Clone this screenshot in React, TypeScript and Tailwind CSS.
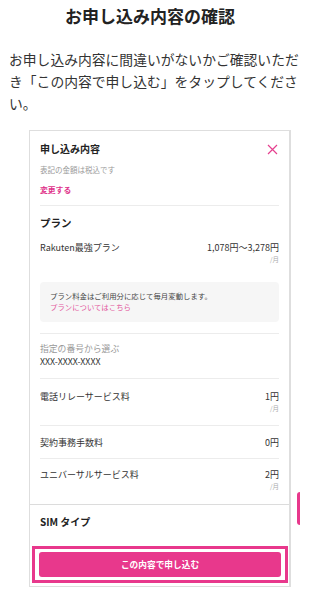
import React from "react";

const jp = { fontFamily: '"Noto Sans CJK JP", "Noto Sans", sans-serif' };

function FeeRow({ label, price, monthly, pt, pb, border = true }: { label: string; price: string; monthly?: boolean; pt: string; pb: string; border?: boolean }) {
  return (
    <div className={`flex justify-between ${pt} ${pb} ${border ? "border-b border-[#ececec]" : ""}`}>
      <span className="text-[9px] leading-[13px] text-[#333]">{label}</span>
      <div className="flex flex-col items-end">
        <span className="text-[9px] leading-[13px] text-[#333]">{price}</span>
        {monthly && <span className="text-[6.5px] leading-[10px] text-[#aaa]">/月</span>}
      </div>
    </div>
  );
}

export default function App() {
  return (
    <div className="relative w-[300px] h-[592px] overflow-hidden bg-white text-[#222]" style={jp}>
      {/* 見出し */}
      <h1 className="pt-[4px] text-center text-[17px] leading-[24px] font-bold">お申し込み内容の確認</h1>
      <p className="mt-[20px] pl-[9px] text-[13.8px] leading-[22px] text-[#333]">
        お申し込み内容に間違いがないかご確認いただき「この内容で申し込む」をタップしてください。
      </p>

      {/* 申し込み内容カード */}
      <div className="mt-[16px] ml-[29px] w-[262px] border border-r-2 border-[#dedede]">
        <div className="px-[10px]">
          <div className="pt-[11px] pb-[9px] border-b border-[#ececec]">
            <div className="flex items-center justify-between">
              <span className="text-[10px] leading-[14px] font-bold">申し込み内容</span>
              <svg width="11" height="11" viewBox="0 0 11 11" className="mr-[1px]">
                <path d="M1 1L10 10M10 1L1 10" stroke="#e5408f" strokeWidth="1.2" />
              </svg>
            </div>
            <div className="mt-[8px] text-[7.5px] leading-[12px] text-[#999]">表記の金額は税込です</div>
            <div className="mt-[8px] text-[7.8px] leading-[12px] font-bold text-[#e0338b]">変更する</div>
          </div>

          <div className="pt-[9px] pb-[11px] border-b border-[#ececec]">
            <div className="text-[10.5px] leading-[16px] font-bold">プラン</div>
            <div className="mt-[10px] flex justify-between">
              <span className="text-[9px] leading-[13px] text-[#333]">Rakuten最強プラン</span>
              <div className="flex flex-col items-end">
                <span className="text-[9px] leading-[13px] text-[#333]">1,078円〜3,278円</span>
                <span className="text-[6.5px] leading-[10px] text-[#aaa]">/月</span>
              </div>
            </div>
            <div className="mt-[18px] rounded-[4px] bg-[#f6f6f6] pl-[10px] pt-[8px] pb-[10px]">
              <div className="text-[7.4px] leading-[11px] text-[#444]">プラン料金はご利用分に応じて毎月変動します。</div>
              <div className="text-[7.4px] leading-[11px] text-[#e35a9e]">プランについてはこちら</div>
            </div>
          </div>

          <div className="pt-[8px] pb-[10px] border-b border-[#ececec]">
            <div className="text-[8.8px] leading-[13px] text-[#999]">指定の番号から選ぶ</div>
            <div className="text-[8.8px] leading-[13px] text-[#333]">XXX-XXXX-XXXX</div>
          </div>

          <FeeRow label="電話リレーサービス料" price="1円" monthly pt="pt-[11px]" pb="pb-[12px]" />
          <FeeRow label="契約事務手数料" price="0円" pt="pt-[10px]" pb="pb-[9px]" />
          <FeeRow label="ユニバーサルサービス料" price="2円" monthly pt="pt-[9px]" pb="pb-[13px]" border={false} />
        </div>

        <div className="border-t border-[#dcdcdc]">
          <div className="px-[10px] pt-[9px] text-[10px] leading-[16px] font-bold">SIM タイプ</div>
          <div className="mt-[16px] mb-[3px] ml-[2px] mr-[1px] border-[3px] border-[#e8388c] px-[4px] py-[3px]">
            <button className="flex h-[25px] w-full items-center justify-center rounded-[3px] bg-[#e8388c] text-[8.7px] font-bold text-white">
              この内容で申し込む
            </button>
          </div>
        </div>
      </div>

      {/* 右端のタブ */}
      <div className="absolute right-0 top-[492px] h-[33px] w-[3px] rounded-l-[3px] bg-[#e8388c]" />
    </div>
  );
}
